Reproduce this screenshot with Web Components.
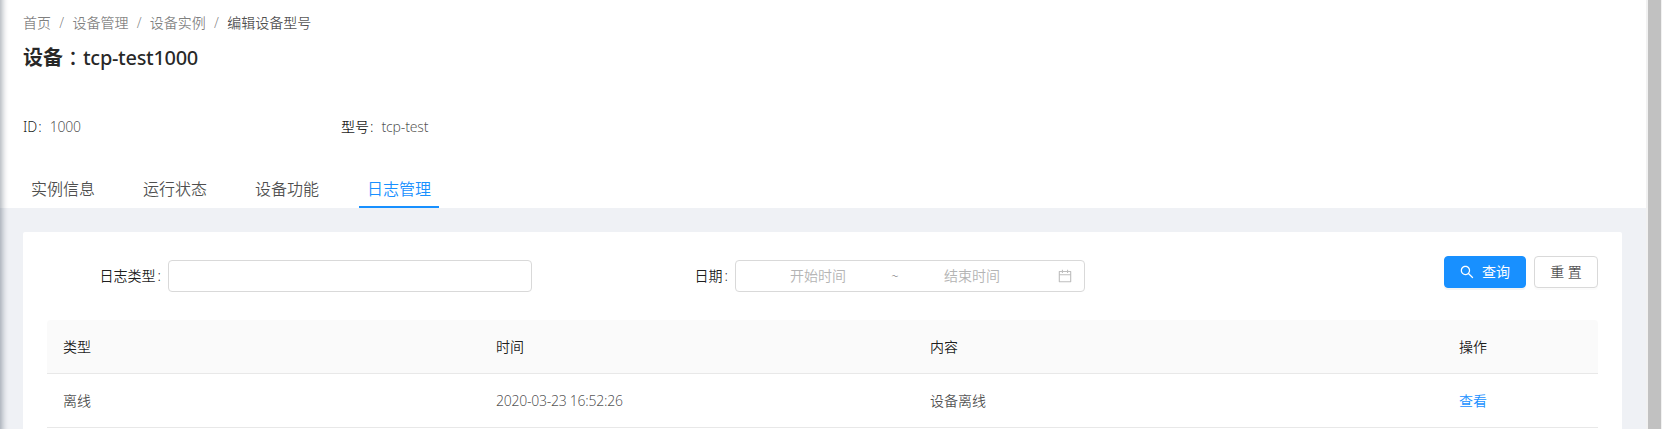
<!DOCTYPE html>
<html lang="zh-CN">
<head>
<meta charset="utf-8">
<title>设备：tcp-test1000</title>
<style>
html,body{margin:0;height:100%;overflow:hidden}
body{font:350 14px/22px "Noto Sans","Noto Sans CJK SC",sans-serif;color:rgba(0,0,0,.7);background:#eff1f5}
</style>
</head>
<body>
<device-page></device-page>
<script>
const define = (name, html) => {
  const tpl = document.createElement('template');
  tpl.innerHTML = html;
  customElements.define(name, class extends HTMLElement {
    constructor() {
      super();
      this.attachShadow({mode: 'open'}).append(tpl.content.cloneNode(true));
    }
  });
};

define('nav-crumbs', `<style>
:host{display:flex;color:rgba(0,0,0,.5);line-height:22px}
::slotted(span:not(:last-child))::after{content:"/";display:inline-block;margin:0 8px;width:5.4px;text-align:center}
::slotted(span:last-child){color:rgba(0,0,0,.7)}
</style><slot></slot>`);

define('info-item', `<style>
:host{display:flex;width:318px;line-height:22px}
.l{display:flex;color:rgba(0,0,0,.9);margin-right:8px}
.l::after{content:":";margin-left:1px}
.v{letter-spacing:var(--track,0)}
</style><span class="l"><slot name="label"></slot></span><span class="v"><slot></slot></span>`);

define('tab-item', `<style>
:host{display:block;box-sizing:border-box;width:80px;height:37px;padding:6px 0 0 8px;font-size:16px;line-height:24px;border-bottom:2px solid transparent}
:host([active]){color:#1890ff;border-color:#1890ff}
</style><slot></slot>`);

define('page-header', `<style>
:host{display:block;box-sizing:border-box;height:208px;padding:12px 23px 0;background:#fff}
h1{display:flex;margin:9px 0 0;font-size:20px;line-height:30px;font-weight:500;color:rgba(0,0,0,.85)}
h1 b{font-weight:700}
h1 i{font-style:normal;font-family:"Noto Sans CJK TC",sans-serif}
h1 span{letter-spacing:-.3px}
.info{display:flex;margin-top:43px}
.tabs{display:flex;gap:32px;margin-top:33px}
</style>
<nav-crumbs><span>首页</span><span>设备管理</span><span>设备实例</span><span>编辑设备型号</span></nav-crumbs>
<h1><b>设备</b><i lang="zh-TW">：</i><span>tcp-test1000</span></h1>
<div class="info">
<info-item style="--track:-.2px"><span slot="label">ID</span>1000</info-item>
<info-item style="--track:-.15px"><span slot="label">型号</span>tcp-test</info-item>
</div>
<div class="tabs"><tab-item>实例信息</tab-item><tab-item>运行状态</tab-item><tab-item>设备功能</tab-item><tab-item active>日志管理</tab-item></div>`);

define('form-field', `<style>
:host{display:flex;align-items:center;height:32px;margin-top:4px}
.l{flex:1;display:flex;justify-content:flex-end;color:rgba(0,0,0,.9);padding-right:7px;white-space:nowrap}
.l::after{content:":";margin-left:2px}
.box{box-sizing:border-box;display:flex;align-items:center;width:var(--w);height:32px;border:1px solid #d9d9d9;border-radius:4px;background:#fff}
</style><span class="l"><slot name="label"></slot></span><div class="box"><slot></slot></div>`);

define('date-range', `<style>
:host{display:flex;align-items:center;width:100%;color:#b4b4b4}
.s{width:164px;text-align:center}
.e{width:140px;margin-left:3px;text-align:center}
.t{width:8px;margin-left:-9px;text-align:center;font-size:13px;color:rgba(0,0,0,.6)}
svg{margin-left:16px}
</style><span class="s">开始时间</span><span class="t">~</span><span class="e">结束时间</span>
<svg width="14" height="14" viewBox="64 64 896 896" fill="#bfbfbf"><path d="M880 184H712v-64c0-4.400-3.600-8-8-8h-56c-4.400 0-8 3.600-8 8v64H384v-64c0-4.400-3.600-8-8-8h-56c-4.400 0-8 3.600-8 8v64H144c-17.700 0-32 14.300-32 32v664c0 17.700 14.300 32 32 32h736c17.700 0 32-14.300 32-32V216c0-17.700-14.300-32-32-32zm-40 656H184V460h656v380zM184 392V256h128v48c0 4.400 3.600 8 8 8h56c4.400 0 8-3.600 8-8v-48h256v48c0 4.400 3.600 8 8 8h56c4.400 0 8-3.600 8-8v-48h128v136H184z"/></svg>`);

define('ui-button', `<style>
:host{box-sizing:border-box;display:flex;align-items:center;justify-content:center;gap:8px;height:32px;width:64px;border:1px solid #d9d9d9;border-radius:4px;background:#fff;box-shadow:0 2px 0 rgba(0,0,0,.015)}
:host([primary]){width:82px;color:#fff;background:#1890ff;border-color:#1890ff;box-shadow:0 2px 0 rgba(0,0,0,.045);font-weight:400}
</style><slot></slot>`);

define('search-form', `<style>
:host{display:flex;height:64px;align-items:flex-start}
.a{width:485px}
.b{width:553px}
.actions{display:flex;gap:8px;margin-left:auto}
</style>
<form-field class="a" style="--w:364px"><span slot="label">日志类型</span></form-field>
<form-field class="b" style="--w:350px"><span slot="label">日期</span><date-range></date-range></form-field>
<div class="actions">
<ui-button primary><svg width="14" height="14" viewBox="64 64 896 896" fill="currentColor"><path d="M909.600 854.500L649.900 594.800C690.200 542.700 712 479 712 412c0-80.200-31.300-155.400-87.900-212.100-56.600-56.700-132-87.900-212.100-87.900s-155.500 31.300-212.100 87.900C143.200 256.500 112 331.800 112 412c0 80.100 31.300 155.500 87.900 212.100C256.500 680.800 331.800 712 412 712c67 0 130.600-21.800 182.700-62l259.700 259.600a8.200 8.200 0 0 0 11.600 0l43.600-43.500a8.200 8.200 0 0 0 0-11.600zM570.400 570.400C528 612.700 471.800 636 412 636s-116-23.300-158.400-65.600C211.300 528 188 471.800 188 412s23.300-116.100 65.600-158.400C296 211.300 352.200 188 412 188s116.100 23.200 158.400 65.600S636 352.200 636 412s-23.300 116.100-65.600 158.400z"/></svg><span>查询</span></ui-button>
<ui-button>重 置</ui-button>
</div>`);

define('table-row', `<style>
:host{box-sizing:border-box;display:grid;grid-template-columns:433px 434px 529px 1fr;height:54px;padding-left:16px;align-items:center;border-bottom:1px solid #e8e8e8}
:host([head]){background:#fafafa;color:rgba(0,0,0,.9);border-radius:4px 4px 0 0}
::slotted(a){color:#1890ff}
::slotted(time){letter-spacing:-.25px}
</style><slot></slot>`);

define('log-card', `<style>
:host{display:block;box-sizing:border-box;margin:24px 24px 0 23px;height:220px;padding:24px 24px 0;background:#fff;border-radius:2px 2px 0 0}
</style>
<search-form></search-form>
<table-row head><span>类型</span><span>时间</span><span>内容</span><span>操作</span></table-row>
<table-row><span>离线</span><time>2020-03-23 16:52:26</time><span>设备离线</span><a>查看</a></table-row>`);

define('scroll-bar', `<style>
:host{display:block;box-sizing:border-box;width:16px;height:100vh;padding:0 1px 0 2px;background:#f1f1f1}
div{height:100%;background:#c1c1c1}
</style><div></div>`);

define('device-page', `<style>
:host{display:flex;height:100vh;overflow:hidden;position:relative}
main{flex:1;min-width:0}
.shade{position:absolute;left:-10px;top:-10px;bottom:-10px;width:10px;box-shadow:2px 0 6px rgba(0,21,41,.35)}
</style><main><page-header></page-header><log-card></log-card></main><scroll-bar></scroll-bar><div class="shade"></div>`);
</script>
</body>
</html>
